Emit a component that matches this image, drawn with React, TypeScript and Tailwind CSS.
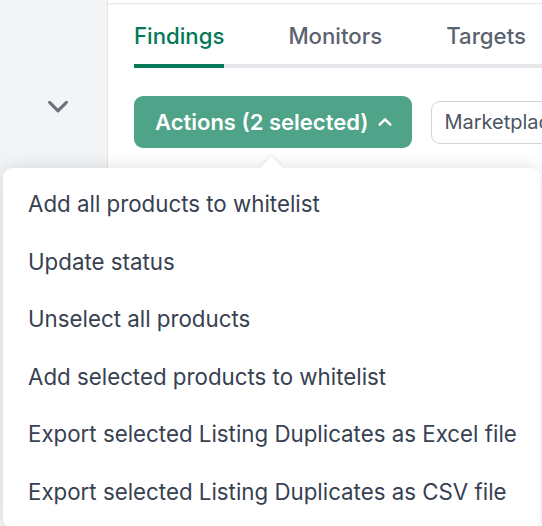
import React from 'react';

const tabs = [
  { label: 'Findings', active: true },
  { label: 'Monitors', active: false },
  { label: 'Targets', active: false },
];

const actions = [
  'Add all products to whitelist',
  'Update status',
  'Unselect all products',
  'Add selected products to whitelist',
  'Export selected Listing Duplicates as Excel file',
  'Export selected Listing Duplicates as CSV file',
];

function Chevron({ up = false, className = '' }: { up?: boolean; className?: string }) {
  return (
    <svg viewBox="0 0 20 20" fill="none" className={className}>
      <path
        d={up ? 'M4 13l6-6 6 6' : 'M3 7l7 7 7-7'}
        stroke="currentColor"
        strokeWidth="2.6"
        strokeLinecap="round"
        strokeLinejoin="round"
      />
    </svg>
  );
}

export default function App() {
  return (
    <div className="relative flex h-[526px] w-[542px] overflow-hidden bg-white font-['Inter',sans-serif]">
      <aside className="flex w-[108px] shrink-0 flex-col items-center border-r border-[#e5e7eb] bg-[#f3f4f6] pt-[94px] pl-[8px]">
        <Chevron className="h-[24px] w-[24px] text-[#6b7280]" />
      </aside>

      <main className="flex min-w-0 flex-1 flex-col">
        <div className="h-[3px] shrink-0 bg-white shadow-[0_1px_2px_rgba(0,0,0,0.12)]" />

        <div className="pl-[26px]">
          <nav className="flex gap-[64px] border-b-4 border-[#e5e7eb] pt-[19px]">
            {tabs.map((t) => (
              <div
                key={t.label}
                className={
                  t.active
                    ? '-mb-1 border-b-4 border-[#047857] pb-[14px] text-[22.2px] leading-[28px] font-medium whitespace-nowrap text-[#047857]'
                    : '-mb-1 border-b-4 border-transparent pb-[14px] text-[22.2px] leading-[28px] font-medium whitespace-nowrap text-[#5b6270]'
                }
              >
                {t.label}
              </div>
            ))}
          </nav>

          <div className="mt-[28px] flex items-center gap-[19px]">
            <button className="flex h-[52px] shrink-0 items-center gap-[8px] rounded-[9px] bg-[#4fa388] pr-[18px] pl-[21px] text-[22px] font-semibold whitespace-nowrap text-white">
              Actions (2 selected)
              <Chevron up className="h-[18px] w-[18px]" />
            </button>
            <div className="flex h-[43px] shrink-0 items-center rounded-[9px] border border-[#d1d5db] pl-[12px] text-[20px] whitespace-nowrap text-[#4b5563]">
              Marketplace
            </div>
          </div>
        </div>
      </main>

      <div className="absolute top-[168px] left-[3px] w-[537px] rounded-[9px] bg-white py-[7px] shadow-[0_0_18px_rgba(0,0,0,0.13)]">
        <div className="absolute -top-[8px] left-[260px] h-[17px] w-[17px] rotate-45 bg-white shadow-[-2px_-2px_4px_rgba(0,0,0,0.06)]" />
        <ul className="relative bg-white">
          {actions.map((a) => (
            <li
              key={a}
              className="flex h-[57.6px] items-center pl-[25px] text-[22.3px] whitespace-nowrap text-[#374151]"
            >
              {a}
            </li>
          ))}
        </ul>
      </div>
    </div>
  );
}
